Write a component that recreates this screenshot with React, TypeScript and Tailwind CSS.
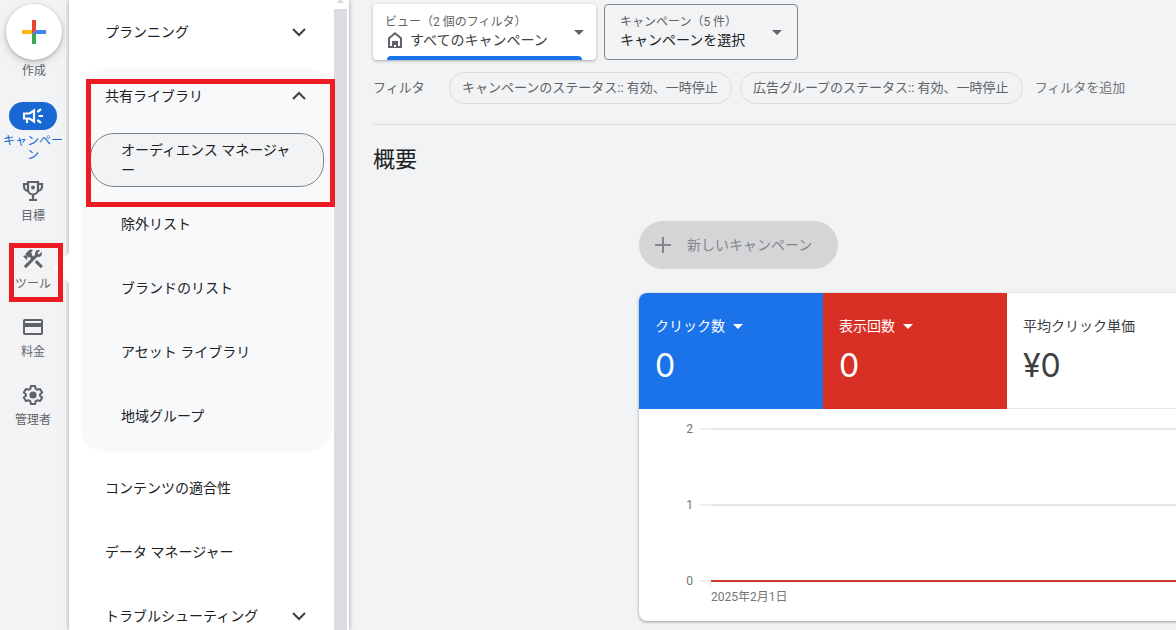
import type { ReactNode } from "react";
import { MdConstruction } from "react-icons/md";

type RailItem = { label: string; icon: ReactNode; current?: boolean; marked?: boolean };

function PlusMark() {
  return (
    <svg viewBox="0 0 24 24" className="size-6" aria-hidden="true">
      <path d="M10 0h4v10l-4 4z" fill="#ea4335" />
      <path d="M0 10h10v4H0z" fill="#fbbc04" />
      <path d="M10 14h4v10h-4z" fill="#34a853" />
      <path d="M14 10h10v4H10z" fill="#4285f4" />
      <path d="M10 10h4l-4 4z" fill="#ea4335" />
    </svg>
  );
}

function MegaphoneIcon() {
  return (
    <svg viewBox="0 0 24 24" className="size-6" fill="none" stroke="currentColor" strokeWidth="2.200" aria-hidden="true">
      <path d="M3 9.500h5.500L13 6.500v11l-4.500-3H3z" />
      <path d="M6 14v5M17.500 12H22M16.300 8l3.700-2.800M16.300 16l3.700 2.800" />
    </svg>
  );
}

function TrophyIcon() {
  return (
    <svg viewBox="0 0 24 24" className="size-6" fill="none" stroke="currentColor" strokeWidth="2.200" aria-hidden="true">
      <path d="M7 3h10v7.500a5 5 0 0 1-10 0z" />
      <path d="M7 5H3v2.500A4.500 4.500 0 0 0 7.300 12M17 5h4v2.500a4.500 4.500 0 0 1-4.300 4.500M12 15.500v5M8 21h8" />
      <circle cx="12" cy="8.500" r="2" fill="currentColor" stroke="none" />
    </svg>
  );
}

function CardIcon() {
  return (
    <svg viewBox="0 0 24 24" className="size-6" fill="none" stroke="currentColor" strokeWidth="2" aria-hidden="true">
      <rect x="3" y="5" width="18" height="14" rx="1" />
      <path d="M3 10h18" strokeWidth="4" />
    </svg>
  );
}

function GearIcon() {
  return (
    <svg viewBox="0 0 24 24" className="size-6" fill="none" stroke="currentColor" strokeWidth="2" strokeLinejoin="round" aria-hidden="true">
      <path d="M9.900 3h4.200l.5 2.700 1.900 1.100 2.600-.9 2.100 3.600-2.100 1.800v1.400l2.100 1.800-2.100 3.600-2.600-.9-1.900 1.100-.5 2.700H9.900l-.5-2.700-1.900-1.100-2.600.9-2.100-3.600 2.100-1.800v-1.400L2.800 9.500l2.100-3.600 2.600.9 1.900-1.100z" />
      <circle cx="12" cy="12" r="3.600" fill="currentColor" stroke="none" />
    </svg>
  );
}

function Chevron({ up = false }: { up?: boolean }) {
  return (
    <svg viewBox="0 0 24 24" className="size-6 shrink-0" fill="none" stroke="#3c4043" strokeWidth="2" aria-hidden="true">
      <path d={up ? "M6 15l6-6 6 6" : "M6 9l6 6 6-6"} />
    </svg>
  );
}

function Caret() {
  return (
    <svg viewBox="0 0 10 5" className="h-[5px] w-[10px] shrink-0" fill="currentColor" aria-hidden="true">
      <path d="M0 0h10L5 5z" />
    </svg>
  );
}

function HomeIcon() {
  return (
    <svg viewBox="0 0 18 18" className="size-[18px]" aria-hidden="true">
      <path d="M4 16V7.200l6-4.900 6 4.900V16z" fill="none" stroke="#5f6368" strokeWidth="2" />
      <path d="M7 16v-6h6v6z" fill="#5f6368" />
      <path d="M9 16v-2h2v2z" fill="#fff" />
    </svg>
  );
}

const railItems: RailItem[] = [
  { label: "キャンペーン", icon: <MegaphoneIcon />, current: true },
  { label: "目標", icon: <TrophyIcon /> },
  { label: "ツール", icon: <MdConstruction className="size-6" />, marked: true },
  { label: "料金", icon: <CardIcon /> },
  { label: "管理者", icon: <GearIcon /> },
];

function Rail() {
  return (
    <nav className="relative z-20 flex w-[69px] shrink-0 flex-col items-center pt-1 pr-px text-xs text-[#5f6368]">
      <button className="flex flex-col items-center">
        <span className="flex size-14 items-center justify-center rounded-full bg-white shadow-[0_1px_3px_rgba(60,64,67,0.3),0_3px_8px_rgba(60,64,67,0.2)]">
          <PlusMark />
        </span>
        <span className="mt-1 leading-[14px]">作成</span>
      </button>
      <ul className="mt-6 flex w-[66px] flex-col self-start">
        {railItems.map((item) => (
          <li key={item.label} className={item.current ? "mb-[15px]" : "relative mb-[22px]"}>
            {item.marked && (
              <svg viewBox="0 0 16 32" className="absolute top-[7px] -right-1 h-8 w-4" aria-hidden="true">
                <path d="M16 0 0 16l16 16z" fill="#fff" />
              </svg>
            )}
            <a href="#" className={item.current ? "flex flex-col items-center text-[#1967d2]" : "flex flex-col items-center"}>
              <span
                className={
                  item.current
                    ? "flex h-7 w-12 items-center justify-center rounded-full bg-[#1967d2] text-white"
                    : "flex h-7 items-center justify-center"
                }
              >
                {item.icon}
              </span>
              <span className="relative mt-1 w-[62px] text-center leading-[14px] break-all">{item.label}</span>
            </a>
            {item.marked && (
              <span className="pointer-events-none absolute -top-[2px] left-[9px] h-[59px] w-[54px] border-5 border-[#ed1c24]" />
            )}
          </li>
        ))}
      </ul>
    </nav>
  );
}

function MenuRow({ label, expandable = false }: { label: string; expandable?: boolean }) {
  if (expandable) {
    return (
      <button className="flex h-16 w-full items-center justify-between pr-[23px] pl-9 text-left">
        {label}
        <Chevron />
      </button>
    );
  }
  return (
    <a href="#" className="flex h-16 items-center pl-9">
      {label}
    </a>
  );
}

function ToolsPanel() {
  return (
    <aside className="relative z-10 flex w-[280px] shrink-0 bg-white text-sm text-[#202124] shadow-[0_0_4px_rgba(60,64,67,0.5)]">
      <div className="flex-1">
        <MenuRow label="プランニング" expandable />
        <section className="relative mt-1 mr-[2px] mb-1 ml-3 rounded-3xl bg-[#f8f9fb] pb-1">
          <button aria-expanded="true" className="mb-1 flex h-14 w-full items-center justify-between pr-[21px] pl-6 text-left">
            共有ライブラリ
            <Chevron up />
          </button>
          <div className="py-[5px] pr-2 pl-[9px]">
            <a href="#" className="block rounded-[24px] border border-[#80868b] bg-[#f1f3f4] py-[6px] pr-6 pl-[30px] leading-5 break-all">
              オーディエンス マネージャー
            </a>
          </div>
          {["除外リスト", "ブランドのリスト", "アセット ライブラリ", "地域グループ"].map((label) => (
            <a key={label} href="#" className="flex h-16 items-center pl-10">
              {label}
            </a>
          ))}
          <span className="pointer-events-none absolute top-[11px] left-[5px] z-10 h-32 w-[249px] border-5 border-[#ed1c24]" />
        </section>
        <MenuRow label="コンテンツの適合性" />
        <MenuRow label="データ マネージャー" />
        <MenuRow label="トラブルシューティング" expandable />
      </div>
      <div className="mr-[2px] flex w-[13px] flex-col items-center">
        <svg viewBox="0 0 13 9" className="h-[9px] w-[13px] shrink-0" aria-hidden="true">
          <path d="M3 3h7L8 0H5z" fill="#dadce0" />
        </svg>
        <div className="w-full flex-1 bg-[#dadce0]" />
      </div>
    </aside>
  );
}

function Scopes() {
  return (
    <div className="flex gap-2 pt-1">
      <button className="relative flex h-14 w-[223px] items-center justify-between rounded bg-white px-3 text-left text-[#5f6368] shadow-[0_1px_3px_rgba(60,64,67,0.4)]">
        <span>
          <span className="block text-xs leading-4">ビュー（2 個のフィルタ）</span>
          <span className="flex items-center gap-[7px] text-sm leading-5 text-[#3c4043]">
            <HomeIcon />
            すべてのキャンペーン
          </span>
        </span>
        <Caret />
        <span className="absolute right-[14px] bottom-0 left-[14px] h-1 rounded-t bg-[#1a73e8]" />
      </button>
      <button className="flex h-14 w-[194px] items-center justify-between rounded border border-[#80868b] px-[15px] text-left text-[#5f6368]">
        <span>
          <span className="block text-xs leading-4">キャンペーン（5 件）</span>
          <span className="block text-sm leading-5 text-[#202124]">キャンペーンを選択</span>
        </span>
        <Caret />
      </button>
    </div>
  );
}

function Filters() {
  return (
    <div className="mt-3 flex items-center border-b border-[#dadce0] pb-5 text-[13px] whitespace-nowrap text-[#5f6368]">
      <span className="w-[76px] shrink-0">フィルタ</span>
      <button className="mr-2 h-8 rounded-full border border-[#dadce0] pr-[13px] pl-3">キャンペーンのステータス:: 有効、一時停止</button>
      <button className="mr-3 h-8 rounded-full border border-[#dadce0] pr-[13px] pl-3">広告グループのステータス:: 有効、一時停止</button>
      <button className="text-[#70757a]">フィルタを追加</button>
    </div>
  );
}

function Chart() {
  return (
    <svg className="block h-[212px] w-full text-xs" role="img" aria-label="クリック数と表示回数">
      {["2", "1", "0"].map((tick, i) => {
        const y = 20 + i * 76;
        return (
          <g key={tick}>
            <text x="54" y={y + 4} textAnchor="end" fill="#757575">
              {tick}
            </text>
            <line x1="60" x2="72" y1={y} y2={y} stroke="#efefef" strokeWidth="2" />
            <line x1="72" x2="100%" y1={y} y2={y} stroke={tick === "0" ? "#cc3a2f" : "#e6e6e6"} strokeWidth="2" />
          </g>
        );
      })}
      <rect x="71" y="173" width="1" height="5" fill="#e6e6e6" />
      <text x="72" y="192" fill="#757575">
        2025年2月1日
      </text>
    </svg>
  );
}

const metrics = [
  { label: "クリック数", value: "0", tone: "bg-[#1a73e8] text-white", menu: true },
  { label: "表示回数", value: "0", tone: "bg-[#d93025] text-white", menu: true },
  { label: "平均クリック単価", value: "¥0", tone: "border-b border-[#e6e6e6] text-[#3c4043]", menu: false },
];

function Overview() {
  return (
    <div className="-mr-2 pl-[266px]">
      <button
        disabled
        className="mt-[45px] flex h-12 items-center gap-4 rounded-full bg-[#d4d5d7] pr-[26px] pl-4 text-sm text-[#85878a]"
      >
        <svg viewBox="0 0 16 16" className="size-4" stroke="currentColor" strokeWidth="2" aria-hidden="true">
          <path d="M8 0v16M0 8h16" />
        </svg>
        新しいキャンペーン
      </button>
      <section className="mt-6 overflow-hidden rounded-lg bg-white shadow-[0_1px_3px_rgba(60,64,67,0.5)]">
        <div className="grid grid-cols-[184px_184px_1fr]">
          {metrics.map((m) => (
            <button key={m.label} className={`flex h-[116px] flex-col items-start px-4 pt-[22px] text-left ${m.tone}`}>
              <span className="flex items-center gap-2 text-sm leading-[22px]">
                {m.label}
                {m.menu && <Caret />}
              </span>
              <span className="mt-[9px] font-['Inter',sans-serif] text-[32px] leading-10">{m.value}</span>
            </button>
          ))}
        </div>
        <Chart />
      </section>
    </div>
  );
}

export default function App() {
  return (
    <div
      lang="ja"
      className="flex h-screen overflow-hidden bg-[#f1f3f4] font-['Roboto','Noto_Sans_CJK_JP',sans-serif] text-[#3c4043]"
    >
      <Rail />
      <ToolsPanel />
      <main className="min-w-0 flex-1 pl-6">
        <Scopes />
        <Filters />
        <h1 className="mt-[19px] text-[22px] leading-8 text-[#202124]">概要</h1>
        <Overview />
      </main>
    </div>
  );
}
